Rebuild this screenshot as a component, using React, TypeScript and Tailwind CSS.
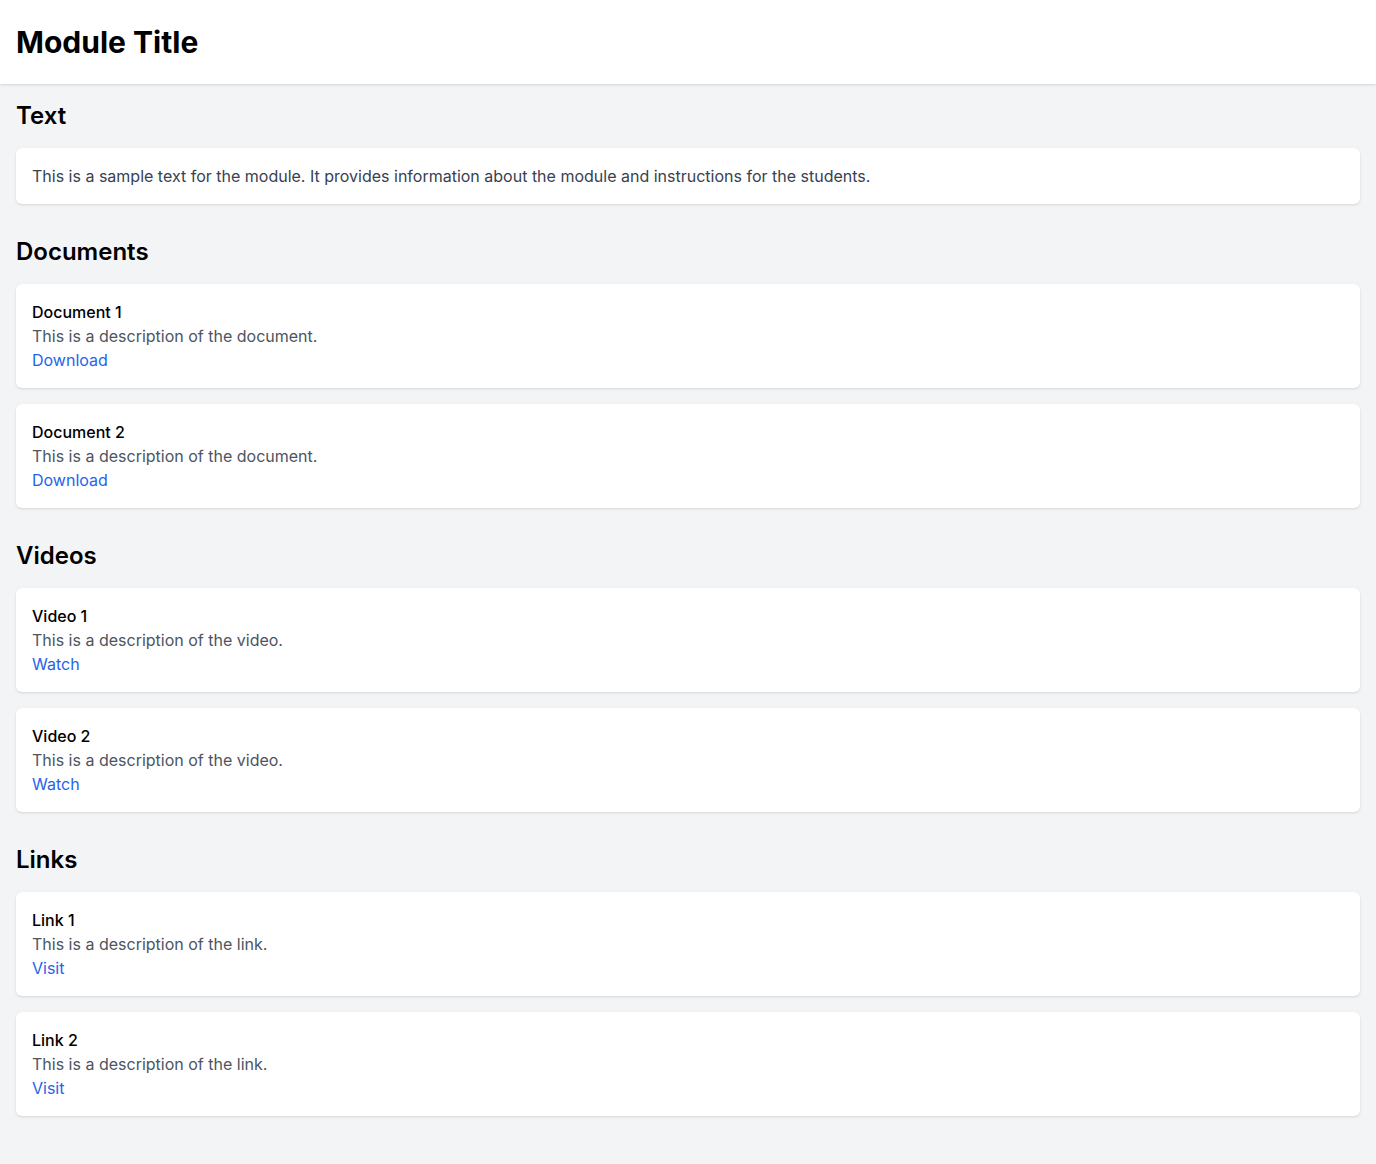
const documents = [
  { title: "Document 1", description: "This is a description of the document.", action: "Download" },
  { title: "Document 2", description: "This is a description of the document.", action: "Download" },
];

const videos = [
  { title: "Video 1", description: "This is a description of the video.", action: "Watch" },
  { title: "Video 2", description: "This is a description of the video.", action: "Watch" },
];

const links = [
  { title: "Link 1", description: "This is a description of the link.", action: "Visit" },
  { title: "Link 2", description: "This is a description of the link.", action: "Visit" },
];

type Item = { title: string; description: string; action: string };

function Section({ title, children }: { title: string; children: React.ReactNode }) {
  return (
    <section className="mb-8">
      <h2 className="text-2xl font-semibold mb-4 text-black">{title}</h2>
      {children}
    </section>
  );
}

function ItemList({ items }: { items: Item[] }) {
  return (
    <div className="space-y-4">
      {items.map((item) => (
        <div key={item.title} className="bg-white rounded-md shadow p-4">
          <h3 className="text-base font-medium text-black">{item.title}</h3>
          <p className="text-[#4b5563]">{item.description}</p>
          <a href="#" className="text-[#2563eb]">
            {item.action}
          </a>
        </div>
      ))}
    </div>
  );
}

export default function App() {
  return (
    <div className="min-h-screen bg-[#f3f4f6] font-['Inter',sans-serif]">
      <header className="bg-white shadow px-4 py-6">
        <h1 className="text-3xl font-bold text-black">Module Title</h1>
      </header>
      <main className="p-4">
        <Section title="Text">
          <div className="bg-white rounded-md shadow p-4">
            <p className="text-[#374151]">
              This is a sample text for the module. It provides information about the module and instructions for the students.
            </p>
          </div>
        </Section>
        <Section title="Documents">
          <ItemList items={documents} />
        </Section>
        <Section title="Videos">
          <ItemList items={videos} />
        </Section>
        <Section title="Links">
          <ItemList items={links} />
        </Section>
      </main>
    </div>
  );
}
